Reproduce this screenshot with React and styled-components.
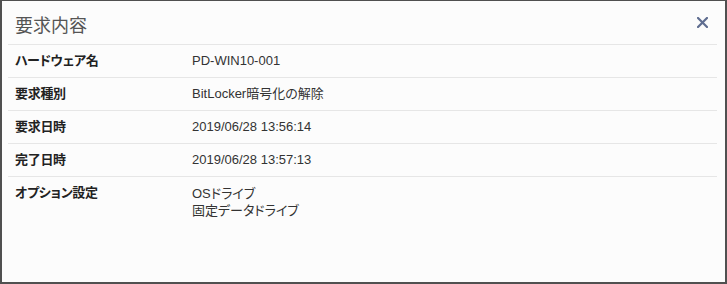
import React from "react";
import styled, { createGlobalStyle } from "styled-components";

const GlobalStyle = createGlobalStyle`
  html, body {
    margin: 0;
    padding: 0;
    background: #fcfcfc;
  }
  body {
    font-family: "Liberation Sans", "Noto Sans CJK JP", sans-serif;
    font-feature-settings: "palt";
  }
`;

const Frame = styled.div`
  box-sizing: border-box;
  width: 727px;
  height: 284px;
  background: #fcfcfc;
  border: 2px solid #505050;
  border-top-width: 1px;
  padding: 0 8px 0 6px;
`;

const Header = styled.div`
  display: flex;
  align-items: center;
  justify-content: space-between;
  height: 43px;
  padding: 0 9px 0 7px;
  border-bottom: 1px solid #e6e6e6;
`;

const Title = styled.h4`
  margin: 0;
  font-size: 18px;
  font-weight: normal;
  color: #555;
  padding-top: 2px;
`;

const Close = styled.button`
  border: 0;
  background: none;
  padding: 0;
  width: 12px;
  height: 12px;
  display: flex;
  align-items: center;
  justify-content: center;
  cursor: pointer;
`;

const Row = styled.div`
  display: grid;
  grid-template-columns: 177px 1fr;
  padding: 8px 7px;
  font-size: 13px;
  line-height: 16px;
  border-bottom: ${(p) => (p.last ? "none" : "1px solid #e6e6e6")};
`;

const Label = styled.div`
  font-weight: bold;
  color: #222;
  letter-spacing: -0.3px;
`;

const Value = styled.div`
  color: #333;
  line-height: ${(p) => (p.multi ? "17px" : "16px")};
`;

const rows = [
  ["ハードウェア名", ["PD-WIN10-001"]],
  ["要求種別", ["BitLocker暗号化の解除"]],
  ["要求日時", ["2019/06/28 13:56:14"]],
  ["完了日時", ["2019/06/28 13:57:13"]],
  ["オプション設定", ["OSドライブ", "固定データドライブ"]],
];

export default function App() {
  return (
    <>
      <GlobalStyle />
      <Frame>
        <Header>
          <Title>要求内容</Title>
          <Close aria-label="close">
            <svg width="11" height="11" viewBox="0 0 11 11">
              <path
                d="M1 1L10 10M10 1L1 10"
                stroke="#5f6d90"
                strokeWidth="2.2"
                strokeLinecap="square"
              />
            </svg>
          </Close>
        </Header>
        {rows.map(([label, values], i) => (
          <Row key={label} last={i === rows.length - 1}>
            <Label>{label}</Label>
            <Value multi={values.length > 1}>
              {values.map((v) => (
                <div key={v}>{v}</div>
              ))}
            </Value>
          </Row>
        ))}
      </Frame>
    </>
  );
}
